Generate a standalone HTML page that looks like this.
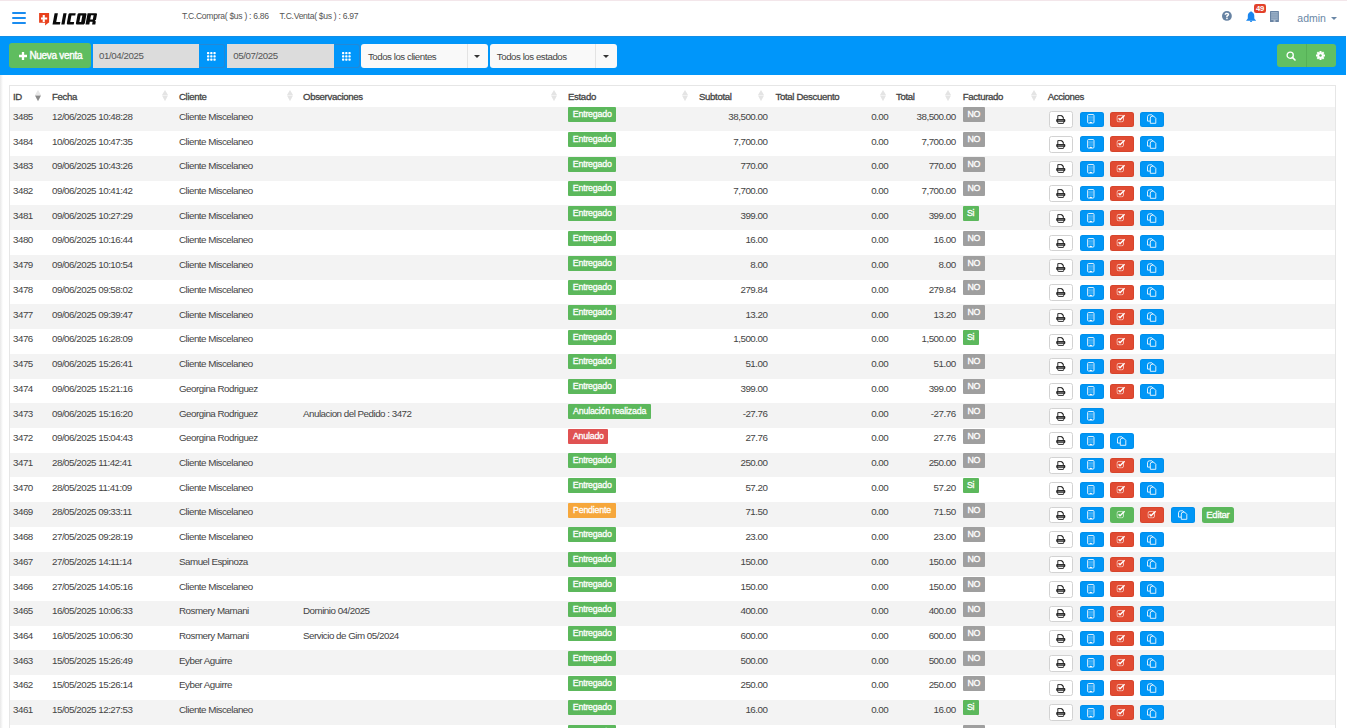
<!DOCTYPE html><html><head><meta charset="utf-8"><style>
*{margin:0;padding:0;box-sizing:border-box}
html,body{width:1347px;height:728px;overflow:hidden;background:#fff;font-family:"Liberation Sans",sans-serif;color:#333}
.abs{position:absolute}
#topline{position:absolute;left:0;top:0;width:1347px;height:1px;background:#f3e6ea}
#burger{position:absolute;left:11.5px;top:12px;width:15px;height:12px}
#burger i{position:absolute;left:0;width:14.8px;height:2.4px;border-radius:1.2px;background:#1a8cf0}
#logo{position:absolute;left:39px;top:13px}
.tc{position:absolute;left:181.9px;top:10.8px;font-size:8.6px;letter-spacing:-0.3px;color:#555;white-space:nowrap;line-height:10px}
#admin{position:absolute;left:1297.3px;top:11.5px;font-size:10.5px;color:#6a87a6;line-height:12px}
#bar{position:absolute;left:0;top:36px;width:1346px;height:38.5px;background:#0096fa;border-top:1px solid #128ee6}
.btn{position:absolute;border-radius:3px}
#nv{left:9px;top:43.4px;width:82px;height:24.4px;background:#5fbd5f;color:#fff;font-weight:normal;-webkit-text-stroke:0.35px #fff;font-size:10px;letter-spacing:-0.3px;line-height:24px;white-space:nowrap}
.date{position:absolute;top:44px;height:23.7px;background:#dcdcdc;font-size:9.7px;letter-spacing:-0.4px;color:#555;line-height:23.7px;padding-left:6px}
.cal{position:absolute;top:44px;height:23.7px;width:26px;background:#0096fa;border:1px solid #2388d6;border-left:none;border-radius:0 3px 3px 0}
.sel{position:absolute;top:44px;height:23.5px;background:#f9f9f9;border-radius:3px;font-size:9.7px;letter-spacing:-0.45px;color:#444;line-height:25px;padding-left:6.5px;white-space:nowrap}
.sel .dv{position:absolute;top:0;width:1px;height:100%;background:#e3e3e3}
.sel .ct{position:absolute;top:10.5px;width:0;height:0;border-left:3.5px solid transparent;border-right:3.5px solid transparent;border-top:3.5px solid #333}
#rb{position:absolute;left:1277.2px;top:43.9px;width:58.4px;height:23.4px;background:#62bf62;border-radius:3px}
#rb .dv{position:absolute;left:28.5px;top:0;width:1px;height:100%;background:#57b057}
#tbl{position:absolute;left:9px;top:85px;width:1327px;height:700px;border:1px solid #e6e6e6;background:#fff}
#lgrad{position:absolute;left:0;top:74.5px;width:3px;height:660px;background:linear-gradient(to right,#e8e8e8,#fff)}
.th{position:absolute;top:90.9px;font-size:9.6px;font-weight:normal;-webkit-text-stroke:0.3px #444;letter-spacing:-0.33px;color:#444;line-height:11px;white-space:nowrap}
.sort{position:absolute;top:90.2px;width:6px;height:12px;line-height:0}
.row{position:absolute;left:0;width:1347px;height:24.73px;padding:0 12px 0 10px;background-clip:content-box}
.row.g{background-color:#f3f3f3}
.row .t{position:absolute;top:4.3px;font-size:9.8px;letter-spacing:-0.5px;line-height:11px;white-space:nowrap;color:#444}
.row .t.r{text-align:right}
.row .lb{position:absolute;top:0.6px;height:15px;font-size:8.8px;font-weight:normal;-webkit-text-stroke:0.3px #fff;letter-spacing:-0.2px;color:#fff;line-height:14.6px;padding:0 4.6px;white-space:nowrap;border-radius:1px}
.row .fno{background:#9f9f9f;width:22.5px;padding:0;text-align:center;letter-spacing:-0.3px}
.row .fsi{background:#5cb85c;width:16px;padding:0;text-align:center;letter-spacing:-0.3px}
.ab{position:absolute;top:5px;height:15.6px;width:23.5px;border-radius:2.5px;display:flex;align-items:center;justify-content:center;line-height:0}
.ab.pr{background:#fff;border:1px solid #d2d2d2;width:24px;height:16.8px;top:4.5px}
.ab.bl{background:#0096f6;box-shadow:inset 0 0 0 1px rgba(0,60,120,0.08)}
.ab.rd{background:#e14b32;box-shadow:inset 0 0 0 1px rgba(120,20,0,0.1)}
.ab.rd svg,.ab.gr svg{transform:translate(-0.6px,-0.5px)}
.ab.gr{background:#5cb85c}
.ab.ed{width:32.2px;font-size:9.6px;color:#fff;-webkit-text-stroke:0.3px #fff;line-height:16px;letter-spacing:-0.3px;top:4.8px}
</style></head><body>
<div id="topline"></div>
<div id="burger"><i style="top:-0.3px"></i><i style="top:4.6px"></i><i style="top:9.5px"></i></div>
<svg width="110" height="36" viewBox="0 0 110 36" style="position:absolute;left:0;top:0">
<path d="M39.1 13.1h10v9.7h-0.6l-3.5 2.6 0.2-2.6h-6.1z" fill="#e8401c"/>
<path d="M42.7 15h2.1v2.4h2.4v2.1h-2.4v2.4h-2.1v-2.4h-1.7v-2.1h1.7z" fill="#fff"/>
<g transform="translate(0,13.2) skewX(-10.6)" fill="#0a0a0a" fill-rule="evenodd">
<path d="M54.6 0H57.9V8.9H62V11.2H54.6Z"/>
<path d="M63.4 0H66.6V11.2H63.4Z"/>
<path d="M69.5 0H75.7V2.4H71.9V8.8H75.8V11.2H69.5L68.7 10.4V0.8Z"/>
<path d="M78.6 0H86V0L86.7 0.8V10.4L85.9 11.2H78.6L77.8 10.4V0.8ZM81 2.3V8.9H82.8V2.3Z"/>
<path d="M87.6 0H96.4L97.2 0.8V6.6L96.2 7.6L97.4 8.4V11.2H94.2V8.6H91.4V11.2H87.6ZM91.4 2.1V6.3H94V2.1Z"/>
</g></svg>
<div class="tc">T.C.Compra( $us ) : 6.86</div><div class="tc" style="left:279.6px">T.C.Venta( $us ) : 6.97</div>
<svg width="10" height="10" viewBox="0 0 10 10" style="position:absolute;left:1221.6px;top:11.2px"><circle cx="4.9" cy="4.95" r="4.9" fill="#6682a2"/><path d="M2.6 3.8C2.6 2.4 3.6 1.8 4.9 1.8C6.3 1.8 7.2 2.6 7.2 3.6C7.2 4.7 6.1 5 5.7 5.4V6.2H4.2V5.1C4.2 4.2 5.7 4 5.7 3.5C5.7 3.2 5.4 3 4.9 3C4.4 3 4.1 3.3 4.1 3.8Z" fill="#fff"/><rect x="4.2" y="6.8" width="1.5" height="1.4" fill="#fff"/></svg><svg width="10.2" height="11.1" viewBox="0 0 10.2 10.3" preserveAspectRatio="none" style="position:absolute;left:1245.5px;top:10.7px"><path d="M5.05 0.2C5.6 0.2 5.75 0.6 5.75 0.9C7.5 1.3 8.3 2.8 8.3 4.6V6.6C8.3 7.5 9.3 8.1 10.2 9H0C0.9 8.1 1.8 7.5 1.8 6.6V4.6C1.8 2.8 2.6 1.3 4.35 0.9C4.35 0.6 4.5 0.2 5.05 0.2Z" fill="#1a86ee"/><path d="M3.9 9.1H6.2A1.15 1.15 0 0 1 3.9 9.1Z" fill="#1a86ee"/></svg><div style="position:absolute;left:1254px;top:3.5px;width:12.1px;height:9.3px;background:#e2412a;border-radius:2.2px;color:#fff;font-size:7.6px;font-weight:bold;line-height:9.6px;text-align:center;letter-spacing:-0.2px">49</div><svg width="10" height="12" viewBox="0 0 10 12" style="position:absolute;left:1269.8px;top:10.9px"><rect x="0" y="0" width="8.9" height="11" rx="0.6" fill="#6883a3"/><rect x="1.1" y="1" width="6.7" height="8.1" fill="#9ab0c7"/><path d="M1.1 2.6h6.7M1.1 4.2h6.7M1.1 5.8h6.7M1.1 7.4h6.7" stroke="#7a93b0" stroke-width="0.55"/><rect x="3.3" y="9.5" width="2.4" height="0.9" rx="0.45" fill="#fff"/></svg>
<div id="admin">admin</div><div style="position:absolute;left:1330.6px;top:17px;width:0;height:0;border-left:3px solid transparent;border-right:3px solid transparent;border-top:3px solid #6a87a6"></div>
<div id="bar"></div>
<div class="btn" id="nv"><svg width="8" height="8" viewBox="0 0 9 9" style="position:absolute;left:9.7px;top:8.4px"><path d="M3.2 0h2.6v3.2h3.2v2.6h-3.2v3.2h-2.6v-3.2h-3.2v-2.6h3.2z" fill="#fff"/></svg><span style="position:absolute;left:20.4px;top:0.6px">Nueva venta</span></div>
<div class="date" style="left:93px;width:106.5px">01/04/2025</div>
<div class="cal" style="left:199.4px"><svg width="10" height="10" viewBox="0 0 10 10" style="position:absolute;left:7.7px;top:7.1px"><rect x="0.0" y="0.0" width="2.3" height="2.3" rx="0.7" fill="#fff"/><rect x="0.0" y="3.2" width="2.3" height="2.3" rx="0.7" fill="#fff"/><rect x="0.0" y="6.4" width="2.3" height="2.3" rx="0.7" fill="#fff"/><rect x="3.2" y="0.0" width="2.3" height="2.3" rx="0.7" fill="#fff"/><rect x="3.2" y="3.2" width="2.3" height="2.3" rx="0.7" fill="#fff"/><rect x="3.2" y="6.4" width="2.3" height="2.3" rx="0.7" fill="#fff"/><rect x="6.4" y="0.0" width="2.3" height="2.3" rx="0.7" fill="#fff"/><rect x="6.4" y="3.2" width="2.3" height="2.3" rx="0.7" fill="#fff"/><rect x="6.4" y="6.4" width="2.3" height="2.3" rx="0.7" fill="#fff"/></svg></div>
<div class="date" style="left:227.2px;width:106.7px">05/07/2025</div>
<div class="cal" style="left:333.9px"><svg width="10" height="10" viewBox="0 0 10 10" style="position:absolute;left:7.7px;top:7.1px"><rect x="0.0" y="0.0" width="2.3" height="2.3" rx="0.7" fill="#fff"/><rect x="0.0" y="3.2" width="2.3" height="2.3" rx="0.7" fill="#fff"/><rect x="0.0" y="6.4" width="2.3" height="2.3" rx="0.7" fill="#fff"/><rect x="3.2" y="0.0" width="2.3" height="2.3" rx="0.7" fill="#fff"/><rect x="3.2" y="3.2" width="2.3" height="2.3" rx="0.7" fill="#fff"/><rect x="3.2" y="6.4" width="2.3" height="2.3" rx="0.7" fill="#fff"/><rect x="6.4" y="0.0" width="2.3" height="2.3" rx="0.7" fill="#fff"/><rect x="6.4" y="3.2" width="2.3" height="2.3" rx="0.7" fill="#fff"/><rect x="6.4" y="6.4" width="2.3" height="2.3" rx="0.7" fill="#fff"/></svg></div>
<div class="sel" style="left:361.4px;width:126.5px">Todos los clientes<div class="dv" style="left:105.2px"></div><div class="ct" style="left:112.8px"></div></div>
<div class="sel" style="left:490.3px;width:126.3px">Todos los estados<div class="dv" style="left:104.8px"></div><div class="ct" style="left:112.4px"></div></div>
<div id="rb"><svg width="10" height="10" viewBox="0 0 10 10" style="position:absolute;left:9px;top:7px"><circle cx="4.2" cy="4.2" r="3.1" fill="none" stroke="#fff" stroke-width="1.3"/><path d="M6.4 6.4L9 9" stroke="#fff" stroke-width="1.6" stroke-linecap="round"/></svg><div class="dv"></div><svg width="11" height="11" viewBox="-5.5 -5.5 11 11" style="position:absolute;left:38.2px;top:6.3px"><g fill="#fff"><rect x="-1" y="-4.5" width="2" height="2.6" transform="rotate(0)"/><rect x="-1" y="-4.5" width="2" height="2.6" transform="rotate(45)"/><rect x="-1" y="-4.5" width="2" height="2.6" transform="rotate(90)"/><rect x="-1" y="-4.5" width="2" height="2.6" transform="rotate(135)"/><rect x="-1" y="-4.5" width="2" height="2.6" transform="rotate(180)"/><rect x="-1" y="-4.5" width="2" height="2.6" transform="rotate(225)"/><rect x="-1" y="-4.5" width="2" height="2.6" transform="rotate(270)"/><rect x="-1" y="-4.5" width="2" height="2.6" transform="rotate(315)"/><circle r="3.2"/></g><circle r="1.2" fill="#62bf62"/></svg></div>
<div id="lgrad"></div>
<div id="tbl"></div>
<span class="th" style="left:13px">ID</span><span class="sort" style="left:35px"><svg width="6" height="12" viewBox="0 0 6 12"><path d="M3 0.1L6 4.9H0z" fill="#e8e8e8"/><path d="M3 11.3L6 5.6H0z" fill="#8a8a8a"/></svg></span><span class="th" style="left:52px">Fecha</span><span class="sort" style="left:162px"><svg width="6" height="12" viewBox="0 0 6 12"><path d="M3 0.1L6 4.9H0z" fill="#e4e4e4"/><path d="M3 11.3L6 5.6H0z" fill="#e4e4e4"/></svg></span><span class="th" style="left:179px">Cliente</span><span class="sort" style="left:286.5px"><svg width="6" height="12" viewBox="0 0 6 12"><path d="M3 0.1L6 4.9H0z" fill="#e4e4e4"/><path d="M3 11.3L6 5.6H0z" fill="#e4e4e4"/></svg></span><span class="th" style="left:303px">Observaciones</span><span class="sort" style="left:551.3px"><svg width="6" height="12" viewBox="0 0 6 12"><path d="M3 0.1L6 4.9H0z" fill="#e4e4e4"/><path d="M3 11.3L6 5.6H0z" fill="#e4e4e4"/></svg></span><span class="th" style="left:568px">Estado</span><span class="sort" style="left:681.8px"><svg width="6" height="12" viewBox="0 0 6 12"><path d="M3 0.1L6 4.9H0z" fill="#e4e4e4"/><path d="M3 11.3L6 5.6H0z" fill="#e4e4e4"/></svg></span><span class="th" style="left:699px">Subtotal</span><span class="sort" style="left:757.8px"><svg width="6" height="12" viewBox="0 0 6 12"><path d="M3 0.1L6 4.9H0z" fill="#e4e4e4"/><path d="M3 11.3L6 5.6H0z" fill="#e4e4e4"/></svg></span><span class="th" style="left:775.5px">Total Descuento</span><span class="sort" style="left:879.5px"><svg width="6" height="12" viewBox="0 0 6 12"><path d="M3 0.1L6 4.9H0z" fill="#e4e4e4"/><path d="M3 11.3L6 5.6H0z" fill="#e4e4e4"/></svg></span><span class="th" style="left:896px">Total</span><span class="sort" style="left:945.1px"><svg width="6" height="12" viewBox="0 0 6 12"><path d="M3 0.1L6 4.9H0z" fill="#e4e4e4"/><path d="M3 11.3L6 5.6H0z" fill="#e4e4e4"/></svg></span><span class="th" style="left:962.8px">Facturado</span><span class="sort" style="left:1031.2px"><svg width="6" height="12" viewBox="0 0 6 12"><path d="M3 0.1L6 4.9H0z" fill="#e4e4e4"/><path d="M3 11.3L6 5.6H0z" fill="#e4e4e4"/></svg></span><span class="th" style="left:1047.7px">Acciones</span>
<div class="row g" style="top:106.60px"><span class="t" style="left:13px">3485</span><span class="t" style="left:52px">12/06/2025 10:48:28</span><span class="t" style="left:179px">Cliente Miscelaneo</span><span class="t" style="left:303px"></span><span class="lb" style="left:568.2px;width:48px;text-align:center;padding:0;background:#5cb85c">Entregado</span><span class="t r" style="right:579.6px">38,500.00</span><span class="t r" style="right:458.79999999999995px">0.00</span><span class="t r" style="right:391.4px">38,500.00</span><span class="lb fno" style="left:962.5px">NO</span><div class="ab pr" style="left:1048.8px"><svg width="10" height="9" viewBox="0 0 10 9"><path d="M1.8 4.2V0.6h3.9l1.6 1.6v2" fill="none" stroke="#222" stroke-width="0.95"/><path d="M5.5 0.6l1.8 1.8" stroke="#222" stroke-width="1.2"/><rect x="0.2" y="4" width="9.1" height="2.9" rx="0.9" fill="#222"/><path d="M1.8 5.4h5.9" stroke="#fff" stroke-width="0.5"/><rect x="1.8" y="6.2" width="5.9" height="2.2" rx="0.5" fill="#fff" stroke="#222" stroke-width="0.95"/></svg></div><div class="ab bl" style="left:1080.4px"><svg width="8" height="10" viewBox="0 0 8 10" style="transform:translateX(-1px)"><rect x="0.6" y="0.5" width="6.4" height="8.6" rx="1" fill="none" stroke="#fff" stroke-width="0.85"/><path d="M1.2 2.3h5.2M1.2 3.6h5.2M1.2 4.9h5.2M1.2 6.2h5.2" stroke="#fff" stroke-width="0.45" opacity="0.6"/><path d="M2.6 9a1.2 1.2 0 0 1 2.4 0z" fill="#fff"/></svg></div><div class="ab rd" style="left:1110.2px"><svg width="9" height="8" viewBox="0 0 9 8"><rect x="0.6" y="0.9" width="6.5" height="6.5" rx="1.8" fill="none" stroke="#fff" stroke-width="0.9" opacity="0.75"/><path d="M2.2 3.8l1.4 1.4 4.6-4.5" fill="none" stroke="#fff" stroke-width="1.5"/></svg></div><div class="ab bl" style="left:1140.4px"><svg width="10" height="10" viewBox="0 0 10 10"><path d="M0.5 2.9a2.1 2.1 0 0 1 2.1-2.1h2.3l2 2v4.3H0.5z" fill="none" stroke="#fff" stroke-width="0.85"/><path d="M3.3 4.1a1.9 1.9 0 0 1 1.9-1.9h1.5l2.1 2.1v5H3.3z" fill="#0096f6" stroke="#fff" stroke-width="0.85"/></svg></div></div><div class="row" style="top:131.32px"><span class="t" style="left:13px">3484</span><span class="t" style="left:52px">10/06/2025 10:47:35</span><span class="t" style="left:179px">Cliente Miscelaneo</span><span class="t" style="left:303px"></span><span class="lb" style="left:568.2px;width:48px;text-align:center;padding:0;background:#5cb85c">Entregado</span><span class="t r" style="right:579.6px">7,700.00</span><span class="t r" style="right:458.79999999999995px">0.00</span><span class="t r" style="right:391.4px">7,700.00</span><span class="lb fno" style="left:962.5px">NO</span><div class="ab pr" style="left:1048.8px"><svg width="10" height="9" viewBox="0 0 10 9"><path d="M1.8 4.2V0.6h3.9l1.6 1.6v2" fill="none" stroke="#222" stroke-width="0.95"/><path d="M5.5 0.6l1.8 1.8" stroke="#222" stroke-width="1.2"/><rect x="0.2" y="4" width="9.1" height="2.9" rx="0.9" fill="#222"/><path d="M1.8 5.4h5.9" stroke="#fff" stroke-width="0.5"/><rect x="1.8" y="6.2" width="5.9" height="2.2" rx="0.5" fill="#fff" stroke="#222" stroke-width="0.95"/></svg></div><div class="ab bl" style="left:1080.4px"><svg width="8" height="10" viewBox="0 0 8 10" style="transform:translateX(-1px)"><rect x="0.6" y="0.5" width="6.4" height="8.6" rx="1" fill="none" stroke="#fff" stroke-width="0.85"/><path d="M1.2 2.3h5.2M1.2 3.6h5.2M1.2 4.9h5.2M1.2 6.2h5.2" stroke="#fff" stroke-width="0.45" opacity="0.6"/><path d="M2.6 9a1.2 1.2 0 0 1 2.4 0z" fill="#fff"/></svg></div><div class="ab rd" style="left:1110.2px"><svg width="9" height="8" viewBox="0 0 9 8"><rect x="0.6" y="0.9" width="6.5" height="6.5" rx="1.8" fill="none" stroke="#fff" stroke-width="0.9" opacity="0.75"/><path d="M2.2 3.8l1.4 1.4 4.6-4.5" fill="none" stroke="#fff" stroke-width="1.5"/></svg></div><div class="ab bl" style="left:1140.4px"><svg width="10" height="10" viewBox="0 0 10 10"><path d="M0.5 2.9a2.1 2.1 0 0 1 2.1-2.1h2.3l2 2v4.3H0.5z" fill="none" stroke="#fff" stroke-width="0.85"/><path d="M3.3 4.1a1.9 1.9 0 0 1 1.9-1.9h1.5l2.1 2.1v5H3.3z" fill="#0096f6" stroke="#fff" stroke-width="0.85"/></svg></div></div><div class="row g" style="top:156.04px"><span class="t" style="left:13px">3483</span><span class="t" style="left:52px">09/06/2025 10:43:26</span><span class="t" style="left:179px">Cliente Miscelaneo</span><span class="t" style="left:303px"></span><span class="lb" style="left:568.2px;width:48px;text-align:center;padding:0;background:#5cb85c">Entregado</span><span class="t r" style="right:579.6px">770.00</span><span class="t r" style="right:458.79999999999995px">0.00</span><span class="t r" style="right:391.4px">770.00</span><span class="lb fno" style="left:962.5px">NO</span><div class="ab pr" style="left:1048.8px"><svg width="10" height="9" viewBox="0 0 10 9"><path d="M1.8 4.2V0.6h3.9l1.6 1.6v2" fill="none" stroke="#222" stroke-width="0.95"/><path d="M5.5 0.6l1.8 1.8" stroke="#222" stroke-width="1.2"/><rect x="0.2" y="4" width="9.1" height="2.9" rx="0.9" fill="#222"/><path d="M1.8 5.4h5.9" stroke="#fff" stroke-width="0.5"/><rect x="1.8" y="6.2" width="5.9" height="2.2" rx="0.5" fill="#fff" stroke="#222" stroke-width="0.95"/></svg></div><div class="ab bl" style="left:1080.4px"><svg width="8" height="10" viewBox="0 0 8 10" style="transform:translateX(-1px)"><rect x="0.6" y="0.5" width="6.4" height="8.6" rx="1" fill="none" stroke="#fff" stroke-width="0.85"/><path d="M1.2 2.3h5.2M1.2 3.6h5.2M1.2 4.9h5.2M1.2 6.2h5.2" stroke="#fff" stroke-width="0.45" opacity="0.6"/><path d="M2.6 9a1.2 1.2 0 0 1 2.4 0z" fill="#fff"/></svg></div><div class="ab rd" style="left:1110.2px"><svg width="9" height="8" viewBox="0 0 9 8"><rect x="0.6" y="0.9" width="6.5" height="6.5" rx="1.8" fill="none" stroke="#fff" stroke-width="0.9" opacity="0.75"/><path d="M2.2 3.8l1.4 1.4 4.6-4.5" fill="none" stroke="#fff" stroke-width="1.5"/></svg></div><div class="ab bl" style="left:1140.4px"><svg width="10" height="10" viewBox="0 0 10 10"><path d="M0.5 2.9a2.1 2.1 0 0 1 2.1-2.1h2.3l2 2v4.3H0.5z" fill="none" stroke="#fff" stroke-width="0.85"/><path d="M3.3 4.1a1.9 1.9 0 0 1 1.9-1.9h1.5l2.1 2.1v5H3.3z" fill="#0096f6" stroke="#fff" stroke-width="0.85"/></svg></div></div><div class="row" style="top:180.76px"><span class="t" style="left:13px">3482</span><span class="t" style="left:52px">09/06/2025 10:41:42</span><span class="t" style="left:179px">Cliente Miscelaneo</span><span class="t" style="left:303px"></span><span class="lb" style="left:568.2px;width:48px;text-align:center;padding:0;background:#5cb85c">Entregado</span><span class="t r" style="right:579.6px">7,700.00</span><span class="t r" style="right:458.79999999999995px">0.00</span><span class="t r" style="right:391.4px">7,700.00</span><span class="lb fno" style="left:962.5px">NO</span><div class="ab pr" style="left:1048.8px"><svg width="10" height="9" viewBox="0 0 10 9"><path d="M1.8 4.2V0.6h3.9l1.6 1.6v2" fill="none" stroke="#222" stroke-width="0.95"/><path d="M5.5 0.6l1.8 1.8" stroke="#222" stroke-width="1.2"/><rect x="0.2" y="4" width="9.1" height="2.9" rx="0.9" fill="#222"/><path d="M1.8 5.4h5.9" stroke="#fff" stroke-width="0.5"/><rect x="1.8" y="6.2" width="5.9" height="2.2" rx="0.5" fill="#fff" stroke="#222" stroke-width="0.95"/></svg></div><div class="ab bl" style="left:1080.4px"><svg width="8" height="10" viewBox="0 0 8 10" style="transform:translateX(-1px)"><rect x="0.6" y="0.5" width="6.4" height="8.6" rx="1" fill="none" stroke="#fff" stroke-width="0.85"/><path d="M1.2 2.3h5.2M1.2 3.6h5.2M1.2 4.9h5.2M1.2 6.2h5.2" stroke="#fff" stroke-width="0.45" opacity="0.6"/><path d="M2.6 9a1.2 1.2 0 0 1 2.4 0z" fill="#fff"/></svg></div><div class="ab rd" style="left:1110.2px"><svg width="9" height="8" viewBox="0 0 9 8"><rect x="0.6" y="0.9" width="6.5" height="6.5" rx="1.8" fill="none" stroke="#fff" stroke-width="0.9" opacity="0.75"/><path d="M2.2 3.8l1.4 1.4 4.6-4.5" fill="none" stroke="#fff" stroke-width="1.5"/></svg></div><div class="ab bl" style="left:1140.4px"><svg width="10" height="10" viewBox="0 0 10 10"><path d="M0.5 2.9a2.1 2.1 0 0 1 2.1-2.1h2.3l2 2v4.3H0.5z" fill="none" stroke="#fff" stroke-width="0.85"/><path d="M3.3 4.1a1.9 1.9 0 0 1 1.9-1.9h1.5l2.1 2.1v5H3.3z" fill="#0096f6" stroke="#fff" stroke-width="0.85"/></svg></div></div><div class="row g" style="top:205.48px"><span class="t" style="left:13px">3481</span><span class="t" style="left:52px">09/06/2025 10:27:29</span><span class="t" style="left:179px">Cliente Miscelaneo</span><span class="t" style="left:303px"></span><span class="lb" style="left:568.2px;width:48px;text-align:center;padding:0;background:#5cb85c">Entregado</span><span class="t r" style="right:579.6px">399.00</span><span class="t r" style="right:458.79999999999995px">0.00</span><span class="t r" style="right:391.4px">399.00</span><span class="lb fsi" style="left:962.5px">Si</span><div class="ab pr" style="left:1048.8px"><svg width="10" height="9" viewBox="0 0 10 9"><path d="M1.8 4.2V0.6h3.9l1.6 1.6v2" fill="none" stroke="#222" stroke-width="0.95"/><path d="M5.5 0.6l1.8 1.8" stroke="#222" stroke-width="1.2"/><rect x="0.2" y="4" width="9.1" height="2.9" rx="0.9" fill="#222"/><path d="M1.8 5.4h5.9" stroke="#fff" stroke-width="0.5"/><rect x="1.8" y="6.2" width="5.9" height="2.2" rx="0.5" fill="#fff" stroke="#222" stroke-width="0.95"/></svg></div><div class="ab bl" style="left:1080.4px"><svg width="8" height="10" viewBox="0 0 8 10" style="transform:translateX(-1px)"><rect x="0.6" y="0.5" width="6.4" height="8.6" rx="1" fill="none" stroke="#fff" stroke-width="0.85"/><path d="M1.2 2.3h5.2M1.2 3.6h5.2M1.2 4.9h5.2M1.2 6.2h5.2" stroke="#fff" stroke-width="0.45" opacity="0.6"/><path d="M2.6 9a1.2 1.2 0 0 1 2.4 0z" fill="#fff"/></svg></div><div class="ab rd" style="left:1110.2px"><svg width="9" height="8" viewBox="0 0 9 8"><rect x="0.6" y="0.9" width="6.5" height="6.5" rx="1.8" fill="none" stroke="#fff" stroke-width="0.9" opacity="0.75"/><path d="M2.2 3.8l1.4 1.4 4.6-4.5" fill="none" stroke="#fff" stroke-width="1.5"/></svg></div><div class="ab bl" style="left:1140.4px"><svg width="10" height="10" viewBox="0 0 10 10"><path d="M0.5 2.9a2.1 2.1 0 0 1 2.1-2.1h2.3l2 2v4.3H0.5z" fill="none" stroke="#fff" stroke-width="0.85"/><path d="M3.3 4.1a1.9 1.9 0 0 1 1.9-1.9h1.5l2.1 2.1v5H3.3z" fill="#0096f6" stroke="#fff" stroke-width="0.85"/></svg></div></div><div class="row" style="top:230.20px"><span class="t" style="left:13px">3480</span><span class="t" style="left:52px">09/06/2025 10:16:44</span><span class="t" style="left:179px">Cliente Miscelaneo</span><span class="t" style="left:303px"></span><span class="lb" style="left:568.2px;width:48px;text-align:center;padding:0;background:#5cb85c">Entregado</span><span class="t r" style="right:579.6px">16.00</span><span class="t r" style="right:458.79999999999995px">0.00</span><span class="t r" style="right:391.4px">16.00</span><span class="lb fno" style="left:962.5px">NO</span><div class="ab pr" style="left:1048.8px"><svg width="10" height="9" viewBox="0 0 10 9"><path d="M1.8 4.2V0.6h3.9l1.6 1.6v2" fill="none" stroke="#222" stroke-width="0.95"/><path d="M5.5 0.6l1.8 1.8" stroke="#222" stroke-width="1.2"/><rect x="0.2" y="4" width="9.1" height="2.9" rx="0.9" fill="#222"/><path d="M1.8 5.4h5.9" stroke="#fff" stroke-width="0.5"/><rect x="1.8" y="6.2" width="5.9" height="2.2" rx="0.5" fill="#fff" stroke="#222" stroke-width="0.95"/></svg></div><div class="ab bl" style="left:1080.4px"><svg width="8" height="10" viewBox="0 0 8 10" style="transform:translateX(-1px)"><rect x="0.6" y="0.5" width="6.4" height="8.6" rx="1" fill="none" stroke="#fff" stroke-width="0.85"/><path d="M1.2 2.3h5.2M1.2 3.6h5.2M1.2 4.9h5.2M1.2 6.2h5.2" stroke="#fff" stroke-width="0.45" opacity="0.6"/><path d="M2.6 9a1.2 1.2 0 0 1 2.4 0z" fill="#fff"/></svg></div><div class="ab rd" style="left:1110.2px"><svg width="9" height="8" viewBox="0 0 9 8"><rect x="0.6" y="0.9" width="6.5" height="6.5" rx="1.8" fill="none" stroke="#fff" stroke-width="0.9" opacity="0.75"/><path d="M2.2 3.8l1.4 1.4 4.6-4.5" fill="none" stroke="#fff" stroke-width="1.5"/></svg></div><div class="ab bl" style="left:1140.4px"><svg width="10" height="10" viewBox="0 0 10 10"><path d="M0.5 2.9a2.1 2.1 0 0 1 2.1-2.1h2.3l2 2v4.3H0.5z" fill="none" stroke="#fff" stroke-width="0.85"/><path d="M3.3 4.1a1.9 1.9 0 0 1 1.9-1.9h1.5l2.1 2.1v5H3.3z" fill="#0096f6" stroke="#fff" stroke-width="0.85"/></svg></div></div><div class="row g" style="top:254.92px"><span class="t" style="left:13px">3479</span><span class="t" style="left:52px">09/06/2025 10:10:54</span><span class="t" style="left:179px">Cliente Miscelaneo</span><span class="t" style="left:303px"></span><span class="lb" style="left:568.2px;width:48px;text-align:center;padding:0;background:#5cb85c">Entregado</span><span class="t r" style="right:579.6px">8.00</span><span class="t r" style="right:458.79999999999995px">0.00</span><span class="t r" style="right:391.4px">8.00</span><span class="lb fno" style="left:962.5px">NO</span><div class="ab pr" style="left:1048.8px"><svg width="10" height="9" viewBox="0 0 10 9"><path d="M1.8 4.2V0.6h3.9l1.6 1.6v2" fill="none" stroke="#222" stroke-width="0.95"/><path d="M5.5 0.6l1.8 1.8" stroke="#222" stroke-width="1.2"/><rect x="0.2" y="4" width="9.1" height="2.9" rx="0.9" fill="#222"/><path d="M1.8 5.4h5.9" stroke="#fff" stroke-width="0.5"/><rect x="1.8" y="6.2" width="5.9" height="2.2" rx="0.5" fill="#fff" stroke="#222" stroke-width="0.95"/></svg></div><div class="ab bl" style="left:1080.4px"><svg width="8" height="10" viewBox="0 0 8 10" style="transform:translateX(-1px)"><rect x="0.6" y="0.5" width="6.4" height="8.6" rx="1" fill="none" stroke="#fff" stroke-width="0.85"/><path d="M1.2 2.3h5.2M1.2 3.6h5.2M1.2 4.9h5.2M1.2 6.2h5.2" stroke="#fff" stroke-width="0.45" opacity="0.6"/><path d="M2.6 9a1.2 1.2 0 0 1 2.4 0z" fill="#fff"/></svg></div><div class="ab rd" style="left:1110.2px"><svg width="9" height="8" viewBox="0 0 9 8"><rect x="0.6" y="0.9" width="6.5" height="6.5" rx="1.8" fill="none" stroke="#fff" stroke-width="0.9" opacity="0.75"/><path d="M2.2 3.8l1.4 1.4 4.6-4.5" fill="none" stroke="#fff" stroke-width="1.5"/></svg></div><div class="ab bl" style="left:1140.4px"><svg width="10" height="10" viewBox="0 0 10 10"><path d="M0.5 2.9a2.1 2.1 0 0 1 2.1-2.1h2.3l2 2v4.3H0.5z" fill="none" stroke="#fff" stroke-width="0.85"/><path d="M3.3 4.1a1.9 1.9 0 0 1 1.9-1.9h1.5l2.1 2.1v5H3.3z" fill="#0096f6" stroke="#fff" stroke-width="0.85"/></svg></div></div><div class="row" style="top:279.64px"><span class="t" style="left:13px">3478</span><span class="t" style="left:52px">09/06/2025 09:58:02</span><span class="t" style="left:179px">Cliente Miscelaneo</span><span class="t" style="left:303px"></span><span class="lb" style="left:568.2px;width:48px;text-align:center;padding:0;background:#5cb85c">Entregado</span><span class="t r" style="right:579.6px">279.84</span><span class="t r" style="right:458.79999999999995px">0.00</span><span class="t r" style="right:391.4px">279.84</span><span class="lb fno" style="left:962.5px">NO</span><div class="ab pr" style="left:1048.8px"><svg width="10" height="9" viewBox="0 0 10 9"><path d="M1.8 4.2V0.6h3.9l1.6 1.6v2" fill="none" stroke="#222" stroke-width="0.95"/><path d="M5.5 0.6l1.8 1.8" stroke="#222" stroke-width="1.2"/><rect x="0.2" y="4" width="9.1" height="2.9" rx="0.9" fill="#222"/><path d="M1.8 5.4h5.9" stroke="#fff" stroke-width="0.5"/><rect x="1.8" y="6.2" width="5.9" height="2.2" rx="0.5" fill="#fff" stroke="#222" stroke-width="0.95"/></svg></div><div class="ab bl" style="left:1080.4px"><svg width="8" height="10" viewBox="0 0 8 10" style="transform:translateX(-1px)"><rect x="0.6" y="0.5" width="6.4" height="8.6" rx="1" fill="none" stroke="#fff" stroke-width="0.85"/><path d="M1.2 2.3h5.2M1.2 3.6h5.2M1.2 4.9h5.2M1.2 6.2h5.2" stroke="#fff" stroke-width="0.45" opacity="0.6"/><path d="M2.6 9a1.2 1.2 0 0 1 2.4 0z" fill="#fff"/></svg></div><div class="ab rd" style="left:1110.2px"><svg width="9" height="8" viewBox="0 0 9 8"><rect x="0.6" y="0.9" width="6.5" height="6.5" rx="1.8" fill="none" stroke="#fff" stroke-width="0.9" opacity="0.75"/><path d="M2.2 3.8l1.4 1.4 4.6-4.5" fill="none" stroke="#fff" stroke-width="1.5"/></svg></div><div class="ab bl" style="left:1140.4px"><svg width="10" height="10" viewBox="0 0 10 10"><path d="M0.5 2.9a2.1 2.1 0 0 1 2.1-2.1h2.3l2 2v4.3H0.5z" fill="none" stroke="#fff" stroke-width="0.85"/><path d="M3.3 4.1a1.9 1.9 0 0 1 1.9-1.9h1.5l2.1 2.1v5H3.3z" fill="#0096f6" stroke="#fff" stroke-width="0.85"/></svg></div></div><div class="row g" style="top:304.36px"><span class="t" style="left:13px">3477</span><span class="t" style="left:52px">09/06/2025 09:39:47</span><span class="t" style="left:179px">Cliente Miscelaneo</span><span class="t" style="left:303px"></span><span class="lb" style="left:568.2px;width:48px;text-align:center;padding:0;background:#5cb85c">Entregado</span><span class="t r" style="right:579.6px">13.20</span><span class="t r" style="right:458.79999999999995px">0.00</span><span class="t r" style="right:391.4px">13.20</span><span class="lb fno" style="left:962.5px">NO</span><div class="ab pr" style="left:1048.8px"><svg width="10" height="9" viewBox="0 0 10 9"><path d="M1.8 4.2V0.6h3.9l1.6 1.6v2" fill="none" stroke="#222" stroke-width="0.95"/><path d="M5.5 0.6l1.8 1.8" stroke="#222" stroke-width="1.2"/><rect x="0.2" y="4" width="9.1" height="2.9" rx="0.9" fill="#222"/><path d="M1.8 5.4h5.9" stroke="#fff" stroke-width="0.5"/><rect x="1.8" y="6.2" width="5.9" height="2.2" rx="0.5" fill="#fff" stroke="#222" stroke-width="0.95"/></svg></div><div class="ab bl" style="left:1080.4px"><svg width="8" height="10" viewBox="0 0 8 10" style="transform:translateX(-1px)"><rect x="0.6" y="0.5" width="6.4" height="8.6" rx="1" fill="none" stroke="#fff" stroke-width="0.85"/><path d="M1.2 2.3h5.2M1.2 3.6h5.2M1.2 4.9h5.2M1.2 6.2h5.2" stroke="#fff" stroke-width="0.45" opacity="0.6"/><path d="M2.6 9a1.2 1.2 0 0 1 2.4 0z" fill="#fff"/></svg></div><div class="ab rd" style="left:1110.2px"><svg width="9" height="8" viewBox="0 0 9 8"><rect x="0.6" y="0.9" width="6.5" height="6.5" rx="1.8" fill="none" stroke="#fff" stroke-width="0.9" opacity="0.75"/><path d="M2.2 3.8l1.4 1.4 4.6-4.5" fill="none" stroke="#fff" stroke-width="1.5"/></svg></div><div class="ab bl" style="left:1140.4px"><svg width="10" height="10" viewBox="0 0 10 10"><path d="M0.5 2.9a2.1 2.1 0 0 1 2.1-2.1h2.3l2 2v4.3H0.5z" fill="none" stroke="#fff" stroke-width="0.85"/><path d="M3.3 4.1a1.9 1.9 0 0 1 1.9-1.9h1.5l2.1 2.1v5H3.3z" fill="#0096f6" stroke="#fff" stroke-width="0.85"/></svg></div></div><div class="row" style="top:329.08px"><span class="t" style="left:13px">3476</span><span class="t" style="left:52px">09/06/2025 16:28:09</span><span class="t" style="left:179px">Cliente Miscelaneo</span><span class="t" style="left:303px"></span><span class="lb" style="left:568.2px;width:48px;text-align:center;padding:0;background:#5cb85c">Entregado</span><span class="t r" style="right:579.6px">1,500.00</span><span class="t r" style="right:458.79999999999995px">0.00</span><span class="t r" style="right:391.4px">1,500.00</span><span class="lb fsi" style="left:962.5px">Si</span><div class="ab pr" style="left:1048.8px"><svg width="10" height="9" viewBox="0 0 10 9"><path d="M1.8 4.2V0.6h3.9l1.6 1.6v2" fill="none" stroke="#222" stroke-width="0.95"/><path d="M5.5 0.6l1.8 1.8" stroke="#222" stroke-width="1.2"/><rect x="0.2" y="4" width="9.1" height="2.9" rx="0.9" fill="#222"/><path d="M1.8 5.4h5.9" stroke="#fff" stroke-width="0.5"/><rect x="1.8" y="6.2" width="5.9" height="2.2" rx="0.5" fill="#fff" stroke="#222" stroke-width="0.95"/></svg></div><div class="ab bl" style="left:1080.4px"><svg width="8" height="10" viewBox="0 0 8 10" style="transform:translateX(-1px)"><rect x="0.6" y="0.5" width="6.4" height="8.6" rx="1" fill="none" stroke="#fff" stroke-width="0.85"/><path d="M1.2 2.3h5.2M1.2 3.6h5.2M1.2 4.9h5.2M1.2 6.2h5.2" stroke="#fff" stroke-width="0.45" opacity="0.6"/><path d="M2.6 9a1.2 1.2 0 0 1 2.4 0z" fill="#fff"/></svg></div><div class="ab rd" style="left:1110.2px"><svg width="9" height="8" viewBox="0 0 9 8"><rect x="0.6" y="0.9" width="6.5" height="6.5" rx="1.8" fill="none" stroke="#fff" stroke-width="0.9" opacity="0.75"/><path d="M2.2 3.8l1.4 1.4 4.6-4.5" fill="none" stroke="#fff" stroke-width="1.5"/></svg></div><div class="ab bl" style="left:1140.4px"><svg width="10" height="10" viewBox="0 0 10 10"><path d="M0.5 2.9a2.1 2.1 0 0 1 2.1-2.1h2.3l2 2v4.3H0.5z" fill="none" stroke="#fff" stroke-width="0.85"/><path d="M3.3 4.1a1.9 1.9 0 0 1 1.9-1.9h1.5l2.1 2.1v5H3.3z" fill="#0096f6" stroke="#fff" stroke-width="0.85"/></svg></div></div><div class="row g" style="top:353.80px"><span class="t" style="left:13px">3475</span><span class="t" style="left:52px">09/06/2025 15:26:41</span><span class="t" style="left:179px">Cliente Miscelaneo</span><span class="t" style="left:303px"></span><span class="lb" style="left:568.2px;width:48px;text-align:center;padding:0;background:#5cb85c">Entregado</span><span class="t r" style="right:579.6px">51.00</span><span class="t r" style="right:458.79999999999995px">0.00</span><span class="t r" style="right:391.4px">51.00</span><span class="lb fno" style="left:962.5px">NO</span><div class="ab pr" style="left:1048.8px"><svg width="10" height="9" viewBox="0 0 10 9"><path d="M1.8 4.2V0.6h3.9l1.6 1.6v2" fill="none" stroke="#222" stroke-width="0.95"/><path d="M5.5 0.6l1.8 1.8" stroke="#222" stroke-width="1.2"/><rect x="0.2" y="4" width="9.1" height="2.9" rx="0.9" fill="#222"/><path d="M1.8 5.4h5.9" stroke="#fff" stroke-width="0.5"/><rect x="1.8" y="6.2" width="5.9" height="2.2" rx="0.5" fill="#fff" stroke="#222" stroke-width="0.95"/></svg></div><div class="ab bl" style="left:1080.4px"><svg width="8" height="10" viewBox="0 0 8 10" style="transform:translateX(-1px)"><rect x="0.6" y="0.5" width="6.4" height="8.6" rx="1" fill="none" stroke="#fff" stroke-width="0.85"/><path d="M1.2 2.3h5.2M1.2 3.6h5.2M1.2 4.9h5.2M1.2 6.2h5.2" stroke="#fff" stroke-width="0.45" opacity="0.6"/><path d="M2.6 9a1.2 1.2 0 0 1 2.4 0z" fill="#fff"/></svg></div><div class="ab rd" style="left:1110.2px"><svg width="9" height="8" viewBox="0 0 9 8"><rect x="0.6" y="0.9" width="6.5" height="6.5" rx="1.8" fill="none" stroke="#fff" stroke-width="0.9" opacity="0.75"/><path d="M2.2 3.8l1.4 1.4 4.6-4.5" fill="none" stroke="#fff" stroke-width="1.5"/></svg></div><div class="ab bl" style="left:1140.4px"><svg width="10" height="10" viewBox="0 0 10 10"><path d="M0.5 2.9a2.1 2.1 0 0 1 2.1-2.1h2.3l2 2v4.3H0.5z" fill="none" stroke="#fff" stroke-width="0.85"/><path d="M3.3 4.1a1.9 1.9 0 0 1 1.9-1.9h1.5l2.1 2.1v5H3.3z" fill="#0096f6" stroke="#fff" stroke-width="0.85"/></svg></div></div><div class="row" style="top:378.52px"><span class="t" style="left:13px">3474</span><span class="t" style="left:52px">09/06/2025 15:21:16</span><span class="t" style="left:179px">Georgina Rodriguez</span><span class="t" style="left:303px"></span><span class="lb" style="left:568.2px;width:48px;text-align:center;padding:0;background:#5cb85c">Entregado</span><span class="t r" style="right:579.6px">399.00</span><span class="t r" style="right:458.79999999999995px">0.00</span><span class="t r" style="right:391.4px">399.00</span><span class="lb fno" style="left:962.5px">NO</span><div class="ab pr" style="left:1048.8px"><svg width="10" height="9" viewBox="0 0 10 9"><path d="M1.8 4.2V0.6h3.9l1.6 1.6v2" fill="none" stroke="#222" stroke-width="0.95"/><path d="M5.5 0.6l1.8 1.8" stroke="#222" stroke-width="1.2"/><rect x="0.2" y="4" width="9.1" height="2.9" rx="0.9" fill="#222"/><path d="M1.8 5.4h5.9" stroke="#fff" stroke-width="0.5"/><rect x="1.8" y="6.2" width="5.9" height="2.2" rx="0.5" fill="#fff" stroke="#222" stroke-width="0.95"/></svg></div><div class="ab bl" style="left:1080.4px"><svg width="8" height="10" viewBox="0 0 8 10" style="transform:translateX(-1px)"><rect x="0.6" y="0.5" width="6.4" height="8.6" rx="1" fill="none" stroke="#fff" stroke-width="0.85"/><path d="M1.2 2.3h5.2M1.2 3.6h5.2M1.2 4.9h5.2M1.2 6.2h5.2" stroke="#fff" stroke-width="0.45" opacity="0.6"/><path d="M2.6 9a1.2 1.2 0 0 1 2.4 0z" fill="#fff"/></svg></div><div class="ab rd" style="left:1110.2px"><svg width="9" height="8" viewBox="0 0 9 8"><rect x="0.6" y="0.9" width="6.5" height="6.5" rx="1.8" fill="none" stroke="#fff" stroke-width="0.9" opacity="0.75"/><path d="M2.2 3.8l1.4 1.4 4.6-4.5" fill="none" stroke="#fff" stroke-width="1.5"/></svg></div><div class="ab bl" style="left:1140.4px"><svg width="10" height="10" viewBox="0 0 10 10"><path d="M0.5 2.9a2.1 2.1 0 0 1 2.1-2.1h2.3l2 2v4.3H0.5z" fill="none" stroke="#fff" stroke-width="0.85"/><path d="M3.3 4.1a1.9 1.9 0 0 1 1.9-1.9h1.5l2.1 2.1v5H3.3z" fill="#0096f6" stroke="#fff" stroke-width="0.85"/></svg></div></div><div class="row g" style="top:403.24px"><span class="t" style="left:13px">3473</span><span class="t" style="left:52px">09/06/2025 15:16:20</span><span class="t" style="left:179px">Georgina Rodriguez</span><span class="t" style="left:303px">Anulacion del Pedido : 3472</span><span class="lb" style="left:568.2px;width:82.8px;text-align:center;padding:0;background:#5cb85c">Anulación realizada</span><span class="t r" style="right:579.6px">-27.76</span><span class="t r" style="right:458.79999999999995px">0.00</span><span class="t r" style="right:391.4px">-27.76</span><span class="lb fno" style="left:962.5px">NO</span><div class="ab pr" style="left:1048.8px"><svg width="10" height="9" viewBox="0 0 10 9"><path d="M1.8 4.2V0.6h3.9l1.6 1.6v2" fill="none" stroke="#222" stroke-width="0.95"/><path d="M5.5 0.6l1.8 1.8" stroke="#222" stroke-width="1.2"/><rect x="0.2" y="4" width="9.1" height="2.9" rx="0.9" fill="#222"/><path d="M1.8 5.4h5.9" stroke="#fff" stroke-width="0.5"/><rect x="1.8" y="6.2" width="5.9" height="2.2" rx="0.5" fill="#fff" stroke="#222" stroke-width="0.95"/></svg></div><div class="ab bl" style="left:1080.4px"><svg width="8" height="10" viewBox="0 0 8 10" style="transform:translateX(-1px)"><rect x="0.6" y="0.5" width="6.4" height="8.6" rx="1" fill="none" stroke="#fff" stroke-width="0.85"/><path d="M1.2 2.3h5.2M1.2 3.6h5.2M1.2 4.9h5.2M1.2 6.2h5.2" stroke="#fff" stroke-width="0.45" opacity="0.6"/><path d="M2.6 9a1.2 1.2 0 0 1 2.4 0z" fill="#fff"/></svg></div></div><div class="row" style="top:427.96px"><span class="t" style="left:13px">3472</span><span class="t" style="left:52px">09/06/2025 15:04:43</span><span class="t" style="left:179px">Georgina Rodriguez</span><span class="t" style="left:303px"></span><span class="lb" style="left:568.2px;width:40.3px;text-align:center;padding:0;background:#e05252">Anulado</span><span class="t r" style="right:579.6px">27.76</span><span class="t r" style="right:458.79999999999995px">0.00</span><span class="t r" style="right:391.4px">27.76</span><span class="lb fno" style="left:962.5px">NO</span><div class="ab pr" style="left:1048.8px"><svg width="10" height="9" viewBox="0 0 10 9"><path d="M1.8 4.2V0.6h3.9l1.6 1.6v2" fill="none" stroke="#222" stroke-width="0.95"/><path d="M5.5 0.6l1.8 1.8" stroke="#222" stroke-width="1.2"/><rect x="0.2" y="4" width="9.1" height="2.9" rx="0.9" fill="#222"/><path d="M1.8 5.4h5.9" stroke="#fff" stroke-width="0.5"/><rect x="1.8" y="6.2" width="5.9" height="2.2" rx="0.5" fill="#fff" stroke="#222" stroke-width="0.95"/></svg></div><div class="ab bl" style="left:1080.4px"><svg width="8" height="10" viewBox="0 0 8 10" style="transform:translateX(-1px)"><rect x="0.6" y="0.5" width="6.4" height="8.6" rx="1" fill="none" stroke="#fff" stroke-width="0.85"/><path d="M1.2 2.3h5.2M1.2 3.6h5.2M1.2 4.9h5.2M1.2 6.2h5.2" stroke="#fff" stroke-width="0.45" opacity="0.6"/><path d="M2.6 9a1.2 1.2 0 0 1 2.4 0z" fill="#fff"/></svg></div><div class="ab bl" style="left:1110.2px"><svg width="10" height="10" viewBox="0 0 10 10"><path d="M0.5 2.9a2.1 2.1 0 0 1 2.1-2.1h2.3l2 2v4.3H0.5z" fill="none" stroke="#fff" stroke-width="0.85"/><path d="M3.3 4.1a1.9 1.9 0 0 1 1.9-1.9h1.5l2.1 2.1v5H3.3z" fill="#0096f6" stroke="#fff" stroke-width="0.85"/></svg></div></div><div class="row g" style="top:452.68px"><span class="t" style="left:13px">3471</span><span class="t" style="left:52px">28/05/2025 11:42:41</span><span class="t" style="left:179px">Cliente Miscelaneo</span><span class="t" style="left:303px"></span><span class="lb" style="left:568.2px;width:48px;text-align:center;padding:0;background:#5cb85c">Entregado</span><span class="t r" style="right:579.6px">250.00</span><span class="t r" style="right:458.79999999999995px">0.00</span><span class="t r" style="right:391.4px">250.00</span><span class="lb fno" style="left:962.5px">NO</span><div class="ab pr" style="left:1048.8px"><svg width="10" height="9" viewBox="0 0 10 9"><path d="M1.8 4.2V0.6h3.9l1.6 1.6v2" fill="none" stroke="#222" stroke-width="0.95"/><path d="M5.5 0.6l1.8 1.8" stroke="#222" stroke-width="1.2"/><rect x="0.2" y="4" width="9.1" height="2.9" rx="0.9" fill="#222"/><path d="M1.8 5.4h5.9" stroke="#fff" stroke-width="0.5"/><rect x="1.8" y="6.2" width="5.9" height="2.2" rx="0.5" fill="#fff" stroke="#222" stroke-width="0.95"/></svg></div><div class="ab bl" style="left:1080.4px"><svg width="8" height="10" viewBox="0 0 8 10" style="transform:translateX(-1px)"><rect x="0.6" y="0.5" width="6.4" height="8.6" rx="1" fill="none" stroke="#fff" stroke-width="0.85"/><path d="M1.2 2.3h5.2M1.2 3.6h5.2M1.2 4.9h5.2M1.2 6.2h5.2" stroke="#fff" stroke-width="0.45" opacity="0.6"/><path d="M2.6 9a1.2 1.2 0 0 1 2.4 0z" fill="#fff"/></svg></div><div class="ab rd" style="left:1110.2px"><svg width="9" height="8" viewBox="0 0 9 8"><rect x="0.6" y="0.9" width="6.5" height="6.5" rx="1.8" fill="none" stroke="#fff" stroke-width="0.9" opacity="0.75"/><path d="M2.2 3.8l1.4 1.4 4.6-4.5" fill="none" stroke="#fff" stroke-width="1.5"/></svg></div><div class="ab bl" style="left:1140.4px"><svg width="10" height="10" viewBox="0 0 10 10"><path d="M0.5 2.9a2.1 2.1 0 0 1 2.1-2.1h2.3l2 2v4.3H0.5z" fill="none" stroke="#fff" stroke-width="0.85"/><path d="M3.3 4.1a1.9 1.9 0 0 1 1.9-1.9h1.5l2.1 2.1v5H3.3z" fill="#0096f6" stroke="#fff" stroke-width="0.85"/></svg></div></div><div class="row" style="top:477.40px"><span class="t" style="left:13px">3470</span><span class="t" style="left:52px">28/05/2025 11:41:09</span><span class="t" style="left:179px">Cliente Miscelaneo</span><span class="t" style="left:303px"></span><span class="lb" style="left:568.2px;width:48px;text-align:center;padding:0;background:#5cb85c">Entregado</span><span class="t r" style="right:579.6px">57.20</span><span class="t r" style="right:458.79999999999995px">0.00</span><span class="t r" style="right:391.4px">57.20</span><span class="lb fsi" style="left:962.5px">Si</span><div class="ab pr" style="left:1048.8px"><svg width="10" height="9" viewBox="0 0 10 9"><path d="M1.8 4.2V0.6h3.9l1.6 1.6v2" fill="none" stroke="#222" stroke-width="0.95"/><path d="M5.5 0.6l1.8 1.8" stroke="#222" stroke-width="1.2"/><rect x="0.2" y="4" width="9.1" height="2.9" rx="0.9" fill="#222"/><path d="M1.8 5.4h5.9" stroke="#fff" stroke-width="0.5"/><rect x="1.8" y="6.2" width="5.9" height="2.2" rx="0.5" fill="#fff" stroke="#222" stroke-width="0.95"/></svg></div><div class="ab bl" style="left:1080.4px"><svg width="8" height="10" viewBox="0 0 8 10" style="transform:translateX(-1px)"><rect x="0.6" y="0.5" width="6.4" height="8.6" rx="1" fill="none" stroke="#fff" stroke-width="0.85"/><path d="M1.2 2.3h5.2M1.2 3.6h5.2M1.2 4.9h5.2M1.2 6.2h5.2" stroke="#fff" stroke-width="0.45" opacity="0.6"/><path d="M2.6 9a1.2 1.2 0 0 1 2.4 0z" fill="#fff"/></svg></div><div class="ab rd" style="left:1110.2px"><svg width="9" height="8" viewBox="0 0 9 8"><rect x="0.6" y="0.9" width="6.5" height="6.5" rx="1.8" fill="none" stroke="#fff" stroke-width="0.9" opacity="0.75"/><path d="M2.2 3.8l1.4 1.4 4.6-4.5" fill="none" stroke="#fff" stroke-width="1.5"/></svg></div><div class="ab bl" style="left:1140.4px"><svg width="10" height="10" viewBox="0 0 10 10"><path d="M0.5 2.9a2.1 2.1 0 0 1 2.1-2.1h2.3l2 2v4.3H0.5z" fill="none" stroke="#fff" stroke-width="0.85"/><path d="M3.3 4.1a1.9 1.9 0 0 1 1.9-1.9h1.5l2.1 2.1v5H3.3z" fill="#0096f6" stroke="#fff" stroke-width="0.85"/></svg></div></div><div class="row g" style="top:502.12px"><span class="t" style="left:13px">3469</span><span class="t" style="left:52px">28/05/2025 09:33:11</span><span class="t" style="left:179px">Cliente Miscelaneo</span><span class="t" style="left:303px"></span><span class="lb" style="left:568.2px;width:47.6px;text-align:center;padding:0;background:#f6a73c">Pendiente</span><span class="t r" style="right:579.6px">71.50</span><span class="t r" style="right:458.79999999999995px">0.00</span><span class="t r" style="right:391.4px">71.50</span><span class="lb fno" style="left:962.5px">NO</span><div class="ab pr" style="left:1048.8px"><svg width="10" height="9" viewBox="0 0 10 9"><path d="M1.8 4.2V0.6h3.9l1.6 1.6v2" fill="none" stroke="#222" stroke-width="0.95"/><path d="M5.5 0.6l1.8 1.8" stroke="#222" stroke-width="1.2"/><rect x="0.2" y="4" width="9.1" height="2.9" rx="0.9" fill="#222"/><path d="M1.8 5.4h5.9" stroke="#fff" stroke-width="0.5"/><rect x="1.8" y="6.2" width="5.9" height="2.2" rx="0.5" fill="#fff" stroke="#222" stroke-width="0.95"/></svg></div><div class="ab bl" style="left:1080.4px"><svg width="8" height="10" viewBox="0 0 8 10" style="transform:translateX(-1px)"><rect x="0.6" y="0.5" width="6.4" height="8.6" rx="1" fill="none" stroke="#fff" stroke-width="0.85"/><path d="M1.2 2.3h5.2M1.2 3.6h5.2M1.2 4.9h5.2M1.2 6.2h5.2" stroke="#fff" stroke-width="0.45" opacity="0.6"/><path d="M2.6 9a1.2 1.2 0 0 1 2.4 0z" fill="#fff"/></svg></div><div class="ab gr" style="left:1110.2px"><svg width="9" height="8" viewBox="0 0 9 8"><rect x="0.6" y="0.9" width="6.5" height="6.5" rx="1.8" fill="none" stroke="#fff" stroke-width="0.9" opacity="0.75"/><path d="M2.2 3.8l1.4 1.4 4.6-4.5" fill="none" stroke="#fff" stroke-width="1.5"/></svg></div><div class="ab rd" style="left:1140.4px"><svg width="9" height="8" viewBox="0 0 9 8"><rect x="0.6" y="0.9" width="6.5" height="6.5" rx="1.8" fill="none" stroke="#fff" stroke-width="0.9" opacity="0.75"/><path d="M2.2 3.8l1.4 1.4 4.6-4.5" fill="none" stroke="#fff" stroke-width="1.5"/></svg></div><div class="ab bl" style="left:1171px"><svg width="10" height="10" viewBox="0 0 10 10"><path d="M0.5 2.9a2.1 2.1 0 0 1 2.1-2.1h2.3l2 2v4.3H0.5z" fill="none" stroke="#fff" stroke-width="0.85"/><path d="M3.3 4.1a1.9 1.9 0 0 1 1.9-1.9h1.5l2.1 2.1v5H3.3z" fill="#0096f6" stroke="#fff" stroke-width="0.85"/></svg></div><div class="ab gr ed" style="left:1201.8px">Editar</div></div><div class="row" style="top:526.84px"><span class="t" style="left:13px">3468</span><span class="t" style="left:52px">27/05/2025 09:28:19</span><span class="t" style="left:179px">Cliente Miscelaneo</span><span class="t" style="left:303px"></span><span class="lb" style="left:568.2px;width:48px;text-align:center;padding:0;background:#5cb85c">Entregado</span><span class="t r" style="right:579.6px">23.00</span><span class="t r" style="right:458.79999999999995px">0.00</span><span class="t r" style="right:391.4px">23.00</span><span class="lb fno" style="left:962.5px">NO</span><div class="ab pr" style="left:1048.8px"><svg width="10" height="9" viewBox="0 0 10 9"><path d="M1.8 4.2V0.6h3.9l1.6 1.6v2" fill="none" stroke="#222" stroke-width="0.95"/><path d="M5.5 0.6l1.8 1.8" stroke="#222" stroke-width="1.2"/><rect x="0.2" y="4" width="9.1" height="2.9" rx="0.9" fill="#222"/><path d="M1.8 5.4h5.9" stroke="#fff" stroke-width="0.5"/><rect x="1.8" y="6.2" width="5.9" height="2.2" rx="0.5" fill="#fff" stroke="#222" stroke-width="0.95"/></svg></div><div class="ab bl" style="left:1080.4px"><svg width="8" height="10" viewBox="0 0 8 10" style="transform:translateX(-1px)"><rect x="0.6" y="0.5" width="6.4" height="8.6" rx="1" fill="none" stroke="#fff" stroke-width="0.85"/><path d="M1.2 2.3h5.2M1.2 3.6h5.2M1.2 4.9h5.2M1.2 6.2h5.2" stroke="#fff" stroke-width="0.45" opacity="0.6"/><path d="M2.6 9a1.2 1.2 0 0 1 2.4 0z" fill="#fff"/></svg></div><div class="ab rd" style="left:1110.2px"><svg width="9" height="8" viewBox="0 0 9 8"><rect x="0.6" y="0.9" width="6.5" height="6.5" rx="1.8" fill="none" stroke="#fff" stroke-width="0.9" opacity="0.75"/><path d="M2.2 3.8l1.4 1.4 4.6-4.5" fill="none" stroke="#fff" stroke-width="1.5"/></svg></div><div class="ab bl" style="left:1140.4px"><svg width="10" height="10" viewBox="0 0 10 10"><path d="M0.5 2.9a2.1 2.1 0 0 1 2.1-2.1h2.3l2 2v4.3H0.5z" fill="none" stroke="#fff" stroke-width="0.85"/><path d="M3.3 4.1a1.9 1.9 0 0 1 1.9-1.9h1.5l2.1 2.1v5H3.3z" fill="#0096f6" stroke="#fff" stroke-width="0.85"/></svg></div></div><div class="row g" style="top:551.56px"><span class="t" style="left:13px">3467</span><span class="t" style="left:52px">27/05/2025 14:11:14</span><span class="t" style="left:179px">Samuel Espinoza</span><span class="t" style="left:303px"></span><span class="lb" style="left:568.2px;width:48px;text-align:center;padding:0;background:#5cb85c">Entregado</span><span class="t r" style="right:579.6px">150.00</span><span class="t r" style="right:458.79999999999995px">0.00</span><span class="t r" style="right:391.4px">150.00</span><span class="lb fno" style="left:962.5px">NO</span><div class="ab pr" style="left:1048.8px"><svg width="10" height="9" viewBox="0 0 10 9"><path d="M1.8 4.2V0.6h3.9l1.6 1.6v2" fill="none" stroke="#222" stroke-width="0.95"/><path d="M5.5 0.6l1.8 1.8" stroke="#222" stroke-width="1.2"/><rect x="0.2" y="4" width="9.1" height="2.9" rx="0.9" fill="#222"/><path d="M1.8 5.4h5.9" stroke="#fff" stroke-width="0.5"/><rect x="1.8" y="6.2" width="5.9" height="2.2" rx="0.5" fill="#fff" stroke="#222" stroke-width="0.95"/></svg></div><div class="ab bl" style="left:1080.4px"><svg width="8" height="10" viewBox="0 0 8 10" style="transform:translateX(-1px)"><rect x="0.6" y="0.5" width="6.4" height="8.6" rx="1" fill="none" stroke="#fff" stroke-width="0.85"/><path d="M1.2 2.3h5.2M1.2 3.6h5.2M1.2 4.9h5.2M1.2 6.2h5.2" stroke="#fff" stroke-width="0.45" opacity="0.6"/><path d="M2.6 9a1.2 1.2 0 0 1 2.4 0z" fill="#fff"/></svg></div><div class="ab rd" style="left:1110.2px"><svg width="9" height="8" viewBox="0 0 9 8"><rect x="0.6" y="0.9" width="6.5" height="6.5" rx="1.8" fill="none" stroke="#fff" stroke-width="0.9" opacity="0.75"/><path d="M2.2 3.8l1.4 1.4 4.6-4.5" fill="none" stroke="#fff" stroke-width="1.5"/></svg></div><div class="ab bl" style="left:1140.4px"><svg width="10" height="10" viewBox="0 0 10 10"><path d="M0.5 2.9a2.1 2.1 0 0 1 2.1-2.1h2.3l2 2v4.3H0.5z" fill="none" stroke="#fff" stroke-width="0.85"/><path d="M3.3 4.1a1.9 1.9 0 0 1 1.9-1.9h1.5l2.1 2.1v5H3.3z" fill="#0096f6" stroke="#fff" stroke-width="0.85"/></svg></div></div><div class="row" style="top:576.28px"><span class="t" style="left:13px">3466</span><span class="t" style="left:52px">27/05/2025 14:05:16</span><span class="t" style="left:179px">Cliente Miscelaneo</span><span class="t" style="left:303px"></span><span class="lb" style="left:568.2px;width:48px;text-align:center;padding:0;background:#5cb85c">Entregado</span><span class="t r" style="right:579.6px">150.00</span><span class="t r" style="right:458.79999999999995px">0.00</span><span class="t r" style="right:391.4px">150.00</span><span class="lb fno" style="left:962.5px">NO</span><div class="ab pr" style="left:1048.8px"><svg width="10" height="9" viewBox="0 0 10 9"><path d="M1.8 4.2V0.6h3.9l1.6 1.6v2" fill="none" stroke="#222" stroke-width="0.95"/><path d="M5.5 0.6l1.8 1.8" stroke="#222" stroke-width="1.2"/><rect x="0.2" y="4" width="9.1" height="2.9" rx="0.9" fill="#222"/><path d="M1.8 5.4h5.9" stroke="#fff" stroke-width="0.5"/><rect x="1.8" y="6.2" width="5.9" height="2.2" rx="0.5" fill="#fff" stroke="#222" stroke-width="0.95"/></svg></div><div class="ab bl" style="left:1080.4px"><svg width="8" height="10" viewBox="0 0 8 10" style="transform:translateX(-1px)"><rect x="0.6" y="0.5" width="6.4" height="8.6" rx="1" fill="none" stroke="#fff" stroke-width="0.85"/><path d="M1.2 2.3h5.2M1.2 3.6h5.2M1.2 4.9h5.2M1.2 6.2h5.2" stroke="#fff" stroke-width="0.45" opacity="0.6"/><path d="M2.6 9a1.2 1.2 0 0 1 2.4 0z" fill="#fff"/></svg></div><div class="ab rd" style="left:1110.2px"><svg width="9" height="8" viewBox="0 0 9 8"><rect x="0.6" y="0.9" width="6.5" height="6.5" rx="1.8" fill="none" stroke="#fff" stroke-width="0.9" opacity="0.75"/><path d="M2.2 3.8l1.4 1.4 4.6-4.5" fill="none" stroke="#fff" stroke-width="1.5"/></svg></div><div class="ab bl" style="left:1140.4px"><svg width="10" height="10" viewBox="0 0 10 10"><path d="M0.5 2.9a2.1 2.1 0 0 1 2.1-2.1h2.3l2 2v4.3H0.5z" fill="none" stroke="#fff" stroke-width="0.85"/><path d="M3.3 4.1a1.9 1.9 0 0 1 1.9-1.9h1.5l2.1 2.1v5H3.3z" fill="#0096f6" stroke="#fff" stroke-width="0.85"/></svg></div></div><div class="row g" style="top:601.00px"><span class="t" style="left:13px">3465</span><span class="t" style="left:52px">16/05/2025 10:06:33</span><span class="t" style="left:179px">Rosmery Mamani</span><span class="t" style="left:303px">Dominio 04/2025</span><span class="lb" style="left:568.2px;width:48px;text-align:center;padding:0;background:#5cb85c">Entregado</span><span class="t r" style="right:579.6px">400.00</span><span class="t r" style="right:458.79999999999995px">0.00</span><span class="t r" style="right:391.4px">400.00</span><span class="lb fno" style="left:962.5px">NO</span><div class="ab pr" style="left:1048.8px"><svg width="10" height="9" viewBox="0 0 10 9"><path d="M1.8 4.2V0.6h3.9l1.6 1.6v2" fill="none" stroke="#222" stroke-width="0.95"/><path d="M5.5 0.6l1.8 1.8" stroke="#222" stroke-width="1.2"/><rect x="0.2" y="4" width="9.1" height="2.9" rx="0.9" fill="#222"/><path d="M1.8 5.4h5.9" stroke="#fff" stroke-width="0.5"/><rect x="1.8" y="6.2" width="5.9" height="2.2" rx="0.5" fill="#fff" stroke="#222" stroke-width="0.95"/></svg></div><div class="ab bl" style="left:1080.4px"><svg width="8" height="10" viewBox="0 0 8 10" style="transform:translateX(-1px)"><rect x="0.6" y="0.5" width="6.4" height="8.6" rx="1" fill="none" stroke="#fff" stroke-width="0.85"/><path d="M1.2 2.3h5.2M1.2 3.6h5.2M1.2 4.9h5.2M1.2 6.2h5.2" stroke="#fff" stroke-width="0.45" opacity="0.6"/><path d="M2.6 9a1.2 1.2 0 0 1 2.4 0z" fill="#fff"/></svg></div><div class="ab rd" style="left:1110.2px"><svg width="9" height="8" viewBox="0 0 9 8"><rect x="0.6" y="0.9" width="6.5" height="6.5" rx="1.8" fill="none" stroke="#fff" stroke-width="0.9" opacity="0.75"/><path d="M2.2 3.8l1.4 1.4 4.6-4.5" fill="none" stroke="#fff" stroke-width="1.5"/></svg></div><div class="ab bl" style="left:1140.4px"><svg width="10" height="10" viewBox="0 0 10 10"><path d="M0.5 2.9a2.1 2.1 0 0 1 2.1-2.1h2.3l2 2v4.3H0.5z" fill="none" stroke="#fff" stroke-width="0.85"/><path d="M3.3 4.1a1.9 1.9 0 0 1 1.9-1.9h1.5l2.1 2.1v5H3.3z" fill="#0096f6" stroke="#fff" stroke-width="0.85"/></svg></div></div><div class="row" style="top:625.72px"><span class="t" style="left:13px">3464</span><span class="t" style="left:52px">16/05/2025 10:06:30</span><span class="t" style="left:179px">Rosmery Mamani</span><span class="t" style="left:303px">Servicio de Gim 05/2024</span><span class="lb" style="left:568.2px;width:48px;text-align:center;padding:0;background:#5cb85c">Entregado</span><span class="t r" style="right:579.6px">600.00</span><span class="t r" style="right:458.79999999999995px">0.00</span><span class="t r" style="right:391.4px">600.00</span><span class="lb fno" style="left:962.5px">NO</span><div class="ab pr" style="left:1048.8px"><svg width="10" height="9" viewBox="0 0 10 9"><path d="M1.8 4.2V0.6h3.9l1.6 1.6v2" fill="none" stroke="#222" stroke-width="0.95"/><path d="M5.5 0.6l1.8 1.8" stroke="#222" stroke-width="1.2"/><rect x="0.2" y="4" width="9.1" height="2.9" rx="0.9" fill="#222"/><path d="M1.8 5.4h5.9" stroke="#fff" stroke-width="0.5"/><rect x="1.8" y="6.2" width="5.9" height="2.2" rx="0.5" fill="#fff" stroke="#222" stroke-width="0.95"/></svg></div><div class="ab bl" style="left:1080.4px"><svg width="8" height="10" viewBox="0 0 8 10" style="transform:translateX(-1px)"><rect x="0.6" y="0.5" width="6.4" height="8.6" rx="1" fill="none" stroke="#fff" stroke-width="0.85"/><path d="M1.2 2.3h5.2M1.2 3.6h5.2M1.2 4.9h5.2M1.2 6.2h5.2" stroke="#fff" stroke-width="0.45" opacity="0.6"/><path d="M2.6 9a1.2 1.2 0 0 1 2.4 0z" fill="#fff"/></svg></div><div class="ab rd" style="left:1110.2px"><svg width="9" height="8" viewBox="0 0 9 8"><rect x="0.6" y="0.9" width="6.5" height="6.5" rx="1.8" fill="none" stroke="#fff" stroke-width="0.9" opacity="0.75"/><path d="M2.2 3.8l1.4 1.4 4.6-4.5" fill="none" stroke="#fff" stroke-width="1.5"/></svg></div><div class="ab bl" style="left:1140.4px"><svg width="10" height="10" viewBox="0 0 10 10"><path d="M0.5 2.9a2.1 2.1 0 0 1 2.1-2.1h2.3l2 2v4.3H0.5z" fill="none" stroke="#fff" stroke-width="0.85"/><path d="M3.3 4.1a1.9 1.9 0 0 1 1.9-1.9h1.5l2.1 2.1v5H3.3z" fill="#0096f6" stroke="#fff" stroke-width="0.85"/></svg></div></div><div class="row g" style="top:650.44px"><span class="t" style="left:13px">3463</span><span class="t" style="left:52px">15/05/2025 15:26:49</span><span class="t" style="left:179px">Eyber Aguirre</span><span class="t" style="left:303px"></span><span class="lb" style="left:568.2px;width:48px;text-align:center;padding:0;background:#5cb85c">Entregado</span><span class="t r" style="right:579.6px">500.00</span><span class="t r" style="right:458.79999999999995px">0.00</span><span class="t r" style="right:391.4px">500.00</span><span class="lb fno" style="left:962.5px">NO</span><div class="ab pr" style="left:1048.8px"><svg width="10" height="9" viewBox="0 0 10 9"><path d="M1.8 4.2V0.6h3.9l1.6 1.6v2" fill="none" stroke="#222" stroke-width="0.95"/><path d="M5.5 0.6l1.8 1.8" stroke="#222" stroke-width="1.2"/><rect x="0.2" y="4" width="9.1" height="2.9" rx="0.9" fill="#222"/><path d="M1.8 5.4h5.9" stroke="#fff" stroke-width="0.5"/><rect x="1.8" y="6.2" width="5.9" height="2.2" rx="0.5" fill="#fff" stroke="#222" stroke-width="0.95"/></svg></div><div class="ab bl" style="left:1080.4px"><svg width="8" height="10" viewBox="0 0 8 10" style="transform:translateX(-1px)"><rect x="0.6" y="0.5" width="6.4" height="8.6" rx="1" fill="none" stroke="#fff" stroke-width="0.85"/><path d="M1.2 2.3h5.2M1.2 3.6h5.2M1.2 4.9h5.2M1.2 6.2h5.2" stroke="#fff" stroke-width="0.45" opacity="0.6"/><path d="M2.6 9a1.2 1.2 0 0 1 2.4 0z" fill="#fff"/></svg></div><div class="ab rd" style="left:1110.2px"><svg width="9" height="8" viewBox="0 0 9 8"><rect x="0.6" y="0.9" width="6.5" height="6.5" rx="1.8" fill="none" stroke="#fff" stroke-width="0.9" opacity="0.75"/><path d="M2.2 3.8l1.4 1.4 4.6-4.5" fill="none" stroke="#fff" stroke-width="1.5"/></svg></div><div class="ab bl" style="left:1140.4px"><svg width="10" height="10" viewBox="0 0 10 10"><path d="M0.5 2.9a2.1 2.1 0 0 1 2.1-2.1h2.3l2 2v4.3H0.5z" fill="none" stroke="#fff" stroke-width="0.85"/><path d="M3.3 4.1a1.9 1.9 0 0 1 1.9-1.9h1.5l2.1 2.1v5H3.3z" fill="#0096f6" stroke="#fff" stroke-width="0.85"/></svg></div></div><div class="row" style="top:675.16px"><span class="t" style="left:13px">3462</span><span class="t" style="left:52px">15/05/2025 15:26:14</span><span class="t" style="left:179px">Eyber Aguirre</span><span class="t" style="left:303px"></span><span class="lb" style="left:568.2px;width:48px;text-align:center;padding:0;background:#5cb85c">Entregado</span><span class="t r" style="right:579.6px">250.00</span><span class="t r" style="right:458.79999999999995px">0.00</span><span class="t r" style="right:391.4px">250.00</span><span class="lb fno" style="left:962.5px">NO</span><div class="ab pr" style="left:1048.8px"><svg width="10" height="9" viewBox="0 0 10 9"><path d="M1.8 4.2V0.6h3.9l1.6 1.6v2" fill="none" stroke="#222" stroke-width="0.95"/><path d="M5.5 0.6l1.8 1.8" stroke="#222" stroke-width="1.2"/><rect x="0.2" y="4" width="9.1" height="2.9" rx="0.9" fill="#222"/><path d="M1.8 5.4h5.9" stroke="#fff" stroke-width="0.5"/><rect x="1.8" y="6.2" width="5.9" height="2.2" rx="0.5" fill="#fff" stroke="#222" stroke-width="0.95"/></svg></div><div class="ab bl" style="left:1080.4px"><svg width="8" height="10" viewBox="0 0 8 10" style="transform:translateX(-1px)"><rect x="0.6" y="0.5" width="6.4" height="8.6" rx="1" fill="none" stroke="#fff" stroke-width="0.85"/><path d="M1.2 2.3h5.2M1.2 3.6h5.2M1.2 4.9h5.2M1.2 6.2h5.2" stroke="#fff" stroke-width="0.45" opacity="0.6"/><path d="M2.6 9a1.2 1.2 0 0 1 2.4 0z" fill="#fff"/></svg></div><div class="ab rd" style="left:1110.2px"><svg width="9" height="8" viewBox="0 0 9 8"><rect x="0.6" y="0.9" width="6.5" height="6.5" rx="1.8" fill="none" stroke="#fff" stroke-width="0.9" opacity="0.75"/><path d="M2.2 3.8l1.4 1.4 4.6-4.5" fill="none" stroke="#fff" stroke-width="1.5"/></svg></div><div class="ab bl" style="left:1140.4px"><svg width="10" height="10" viewBox="0 0 10 10"><path d="M0.5 2.9a2.1 2.1 0 0 1 2.1-2.1h2.3l2 2v4.3H0.5z" fill="none" stroke="#fff" stroke-width="0.85"/><path d="M3.3 4.1a1.9 1.9 0 0 1 1.9-1.9h1.5l2.1 2.1v5H3.3z" fill="#0096f6" stroke="#fff" stroke-width="0.85"/></svg></div></div><div class="row g" style="top:699.88px"><span class="t" style="left:13px">3461</span><span class="t" style="left:52px">15/05/2025 12:27:53</span><span class="t" style="left:179px">Cliente Miscelaneo</span><span class="t" style="left:303px"></span><span class="lb" style="left:568.2px;width:48px;text-align:center;padding:0;background:#5cb85c">Entregado</span><span class="t r" style="right:579.6px">16.00</span><span class="t r" style="right:458.79999999999995px">0.00</span><span class="t r" style="right:391.4px">16.00</span><span class="lb fsi" style="left:962.5px">Si</span><div class="ab pr" style="left:1048.8px"><svg width="10" height="9" viewBox="0 0 10 9"><path d="M1.8 4.2V0.6h3.9l1.6 1.6v2" fill="none" stroke="#222" stroke-width="0.95"/><path d="M5.5 0.6l1.8 1.8" stroke="#222" stroke-width="1.2"/><rect x="0.2" y="4" width="9.1" height="2.9" rx="0.9" fill="#222"/><path d="M1.8 5.4h5.9" stroke="#fff" stroke-width="0.5"/><rect x="1.8" y="6.2" width="5.9" height="2.2" rx="0.5" fill="#fff" stroke="#222" stroke-width="0.95"/></svg></div><div class="ab bl" style="left:1080.4px"><svg width="8" height="10" viewBox="0 0 8 10" style="transform:translateX(-1px)"><rect x="0.6" y="0.5" width="6.4" height="8.6" rx="1" fill="none" stroke="#fff" stroke-width="0.85"/><path d="M1.2 2.3h5.2M1.2 3.6h5.2M1.2 4.9h5.2M1.2 6.2h5.2" stroke="#fff" stroke-width="0.45" opacity="0.6"/><path d="M2.6 9a1.2 1.2 0 0 1 2.4 0z" fill="#fff"/></svg></div><div class="ab rd" style="left:1110.2px"><svg width="9" height="8" viewBox="0 0 9 8"><rect x="0.6" y="0.9" width="6.5" height="6.5" rx="1.8" fill="none" stroke="#fff" stroke-width="0.9" opacity="0.75"/><path d="M2.2 3.8l1.4 1.4 4.6-4.5" fill="none" stroke="#fff" stroke-width="1.5"/></svg></div><div class="ab bl" style="left:1140.4px"><svg width="10" height="10" viewBox="0 0 10 10"><path d="M0.5 2.9a2.1 2.1 0 0 1 2.1-2.1h2.3l2 2v4.3H0.5z" fill="none" stroke="#fff" stroke-width="0.85"/><path d="M3.3 4.1a1.9 1.9 0 0 1 1.9-1.9h1.5l2.1 2.1v5H3.3z" fill="#0096f6" stroke="#fff" stroke-width="0.85"/></svg></div></div><div class="row" style="top:724.60px"><span class="t" style="left:13px">3460</span><span class="t" style="left:52px">15/05/2025 12:20:11</span><span class="t" style="left:179px">Cliente Miscelaneo</span><span class="t" style="left:303px"></span><span class="lb" style="left:568.2px;width:48px;text-align:center;padding:0;background:#5cb85c">Entregado</span><span class="t r" style="right:579.6px">16.00</span><span class="t r" style="right:458.79999999999995px">0.00</span><span class="t r" style="right:391.4px">16.00</span><span class="lb fno" style="left:962.5px">NO</span><div class="ab pr" style="left:1048.8px"><svg width="10" height="9" viewBox="0 0 10 9"><path d="M1.8 4.2V0.6h3.9l1.6 1.6v2" fill="none" stroke="#222" stroke-width="0.95"/><path d="M5.5 0.6l1.8 1.8" stroke="#222" stroke-width="1.2"/><rect x="0.2" y="4" width="9.1" height="2.9" rx="0.9" fill="#222"/><path d="M1.8 5.4h5.9" stroke="#fff" stroke-width="0.5"/><rect x="1.8" y="6.2" width="5.9" height="2.2" rx="0.5" fill="#fff" stroke="#222" stroke-width="0.95"/></svg></div><div class="ab bl" style="left:1080.4px"><svg width="8" height="10" viewBox="0 0 8 10" style="transform:translateX(-1px)"><rect x="0.6" y="0.5" width="6.4" height="8.6" rx="1" fill="none" stroke="#fff" stroke-width="0.85"/><path d="M1.2 2.3h5.2M1.2 3.6h5.2M1.2 4.9h5.2M1.2 6.2h5.2" stroke="#fff" stroke-width="0.45" opacity="0.6"/><path d="M2.6 9a1.2 1.2 0 0 1 2.4 0z" fill="#fff"/></svg></div><div class="ab rd" style="left:1110.2px"><svg width="9" height="8" viewBox="0 0 9 8"><rect x="0.6" y="0.9" width="6.5" height="6.5" rx="1.8" fill="none" stroke="#fff" stroke-width="0.9" opacity="0.75"/><path d="M2.2 3.8l1.4 1.4 4.6-4.5" fill="none" stroke="#fff" stroke-width="1.5"/></svg></div><div class="ab bl" style="left:1140.4px"><svg width="10" height="10" viewBox="0 0 10 10"><path d="M0.5 2.9a2.1 2.1 0 0 1 2.1-2.1h2.3l2 2v4.3H0.5z" fill="none" stroke="#fff" stroke-width="0.85"/><path d="M3.3 4.1a1.9 1.9 0 0 1 1.9-1.9h1.5l2.1 2.1v5H3.3z" fill="#0096f6" stroke="#fff" stroke-width="0.85"/></svg></div></div>
</body></html>
